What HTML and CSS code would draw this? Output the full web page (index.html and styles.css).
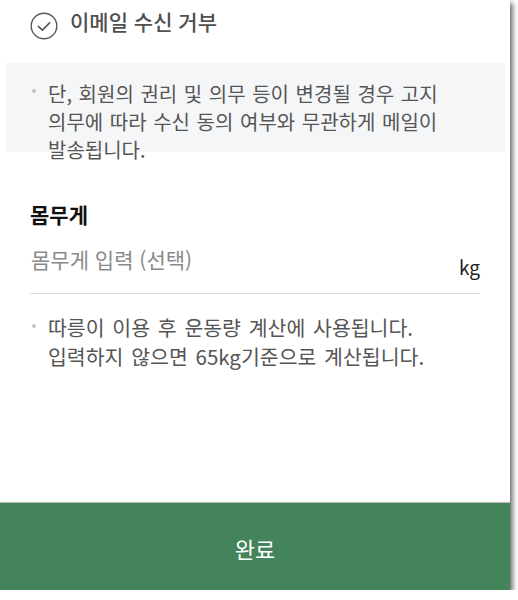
FILE: index.html
```html
<!DOCTYPE html>
<html lang="ko">
<head>
<meta charset="utf-8">
<link rel="stylesheet" href="styles.css">
</head>
<body>
<div class="screen">
  <div class="opt-row">
    <svg class="check" viewBox="0 0 28 28" width="28" height="28">
      <circle cx="14" cy="14" r="12.8" fill="none" stroke="#5a5a5a" stroke-width="1.4"/>
      <path d="M8.4 14.4 L12.4 18.2 L19.6 10.8" fill="none" stroke="#5a5a5a" stroke-width="1.7" stroke-linecap="round" stroke-linejoin="round"/>
    </svg>
    <span class="opt-text">이메일 수신 거부</span>
  </div>

  <div class="notice-box">
    <div class="note">
      <span class="dot"></span>
      <p class="note-text">단, 회원의 권리 및 의무 등이 변경될 경우 고지<br>의무에 따라 수신 동의 여부와 무관하게 메일이<br>발송됩니다.</p>
    </div>
  </div>

  <div class="weight">
    <h2 class="label">몸무게</h2>
    <div class="input-row">
      <span class="placeholder">몸무게 입력 (선택)</span>
      <span class="unit">kg</span>
    </div>
    <div class="note note-2">
      <span class="dot"></span>
      <p class="note-text">따릉이 이용 후 운동량 계산에 사용됩니다.<br>입력하지 않으면 65kg기준으로 계산됩니다.</p>
    </div>
  </div>

  <button class="done">완료</button>
</div>
</body>
</html>
```

FILE: styles.css
```css
* { box-sizing: border-box; }
html, body {
  margin: 0;
  padding: 0;
  background: #ffffff;
}
body {
  font-family: "Noto Sans CJK KR", "Noto Sans", sans-serif;
}
.screen {
  width: 510px;
  height: 590px;
  background: #ffffff;
  display: flex;
  flex-direction: column;
  box-shadow: 3px 3px 5px rgba(0, 0, 0, 0.55);
}
.opt-row {
  display: flex;
  align-items: flex-start;
  gap: 12px;
  padding: 7px 0 0 30px;
  height: 50px;
}
.check {
  margin-top: 5px;
  flex: none;
}
.opt-text {
  font-size: 21px;
  line-height: 28px;
  font-weight: 500;
  color: #505050;
}
.notice-box {
  margin: 13px 5px 0 6px;
  height: 89px;
  background: #f5f6f8;
  padding: 17px 0 0 26px;
}
.note {
  display: flex;
  align-items: flex-start;
  gap: 12px;
}
.dot {
  flex: none;
  width: 4px;
  height: 4px;
  border-radius: 50%;
  background: #c4c4c4;
  margin-top: 9px;
}
.note-text {
  margin: 0;
  font-size: 20px;
  line-height: 28px;
  color: #555555;
  word-spacing: 1px;
}
.weight {
  padding: 0 30px;
}
.label {
  margin: 48px 0 0 0;
  font-size: 21px;
  line-height: 28px;
  font-weight: 700;
  color: #111111;
}
.input-row {
  margin-top: 17px;
  height: 49px;
  display: flex;
  justify-content: space-between;
  align-items: flex-start;
  border-bottom: 1px solid #dcdcdc;
}
.placeholder {
  font-size: 21px;
  line-height: 28px;
  color: #8a8a8a;
  padding-left: 1px;
}
.unit {
  font-size: 19px;
  line-height: 28px;
  color: #222222;
  margin-top: 8px;
}
.note-2 {
  margin-top: 19px;
  padding-left: 2px;
}
.note-2 .dot {
  margin-top: 11px;
}
.note-2 .note-text {
  line-height: 29px;
  font-size: 20.5px;
  word-spacing: 2px;
}
.done {
  margin-top: auto;
  height: 87px;
  width: 100%;
  border: none;
  background: #44845a;
  color: #ffffff;
  font-family: "Noto Sans CJK KR", "Noto Sans", sans-serif;
  font-size: 22px;
  padding: 2px 0 0 0;
  box-shadow: 0 -1px 1px rgba(0, 0, 0, 0.25);
}
```
